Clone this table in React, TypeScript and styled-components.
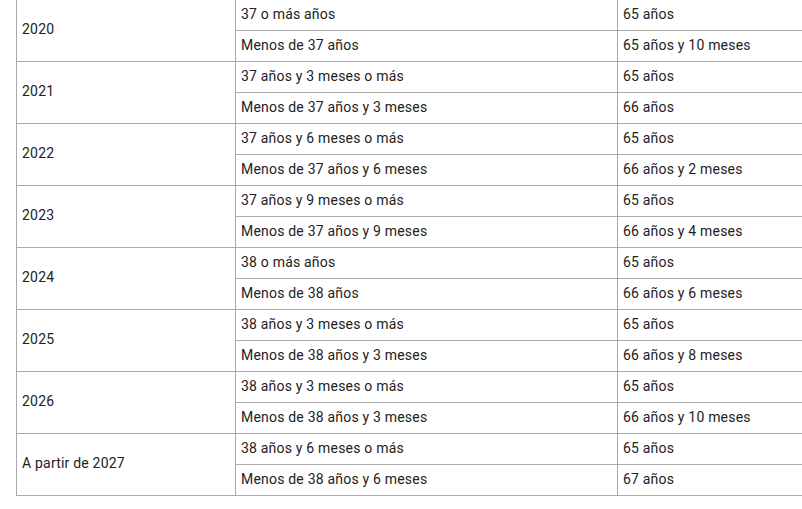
import React from 'react';
import styled, { createGlobalStyle } from 'styled-components';

const GlobalStyle = createGlobalStyle`
  html, body {
    margin: 0;
    padding: 0;
    background: #fff;
    overflow: hidden;
  }
`;

type Row = { year: string; options: [string, string][] };

const rows: Row[] = [
  { year: '2020', options: [['37 o más años', '65 años'], ['Menos de 37 años', '65 años y 10 meses']] },
  { year: '2021', options: [['37 años y 3 meses o más', '65 años'], ['Menos de 37 años y 3 meses', '66 años']] },
  { year: '2022', options: [['37 años y 6 meses o más', '65 años'], ['Menos de 37 años y 6 meses', '66 años y 2 meses']] },
  { year: '2023', options: [['37 años y 9 meses o más', '65 años'], ['Menos de 37 años y 9 meses', '66 años y 4 meses']] },
  { year: '2024', options: [['38 o más años', '65 años'], ['Menos de 38 años', '66 años y 6 meses']] },
  { year: '2025', options: [['38 años y 3 meses o más', '65 años'], ['Menos de 38 años y 3 meses', '66 años y 8 meses']] },
  { year: '2026', options: [['38 años y 3 meses o más', '65 años'], ['Menos de 38 años y 3 meses', '66 años y 10 meses']] },
  { year: 'A partir de 2027', options: [['38 años y 6 meses o más', '65 años'], ['Menos de 38 años y 6 meses', '67 años']] },
];

const Wrapper = styled.div`
  box-sizing: border-box;
  width: 100vw;
  padding-left: 16px;
  margin-top: -1px;
  overflow: hidden;
`;

const Table = styled.table`
  border-collapse: collapse;
  table-layout: fixed;
  width: 820px;
  font-family: Roboto, "Liberation Sans", sans-serif;
  font-size: 14px;
  letter-spacing: 0.2px;
  color: #222;
`;

const Cell = styled.td`
  border: 1px solid #aaa;
  height: 30px;
  padding: 0 5px 2px;
  box-sizing: border-box;
  vertical-align: middle;
  line-height: 17px;
`;

const Line = styled.tr`
  height: 31px;
`;

export default function App() {
  return (
    <>
      <GlobalStyle />
      <Wrapper>
        <Table>
          <colgroup>
            <col style={{ width: 219 }} />
            <col style={{ width: 382 }} />
            <col />
          </colgroup>
          <tbody>
            {rows.map(r =>
              r.options.map((o, i) => (
                <Line key={r.year + i}>
                  {i === 0 && <Cell rowSpan={2}>{r.year}</Cell>}
                  <Cell>{o[0]}</Cell>
                  <Cell>{o[1]}</Cell>
                </Line>
              ))
            )}
          </tbody>
        </Table>
      </Wrapper>
    </>
  );
}
